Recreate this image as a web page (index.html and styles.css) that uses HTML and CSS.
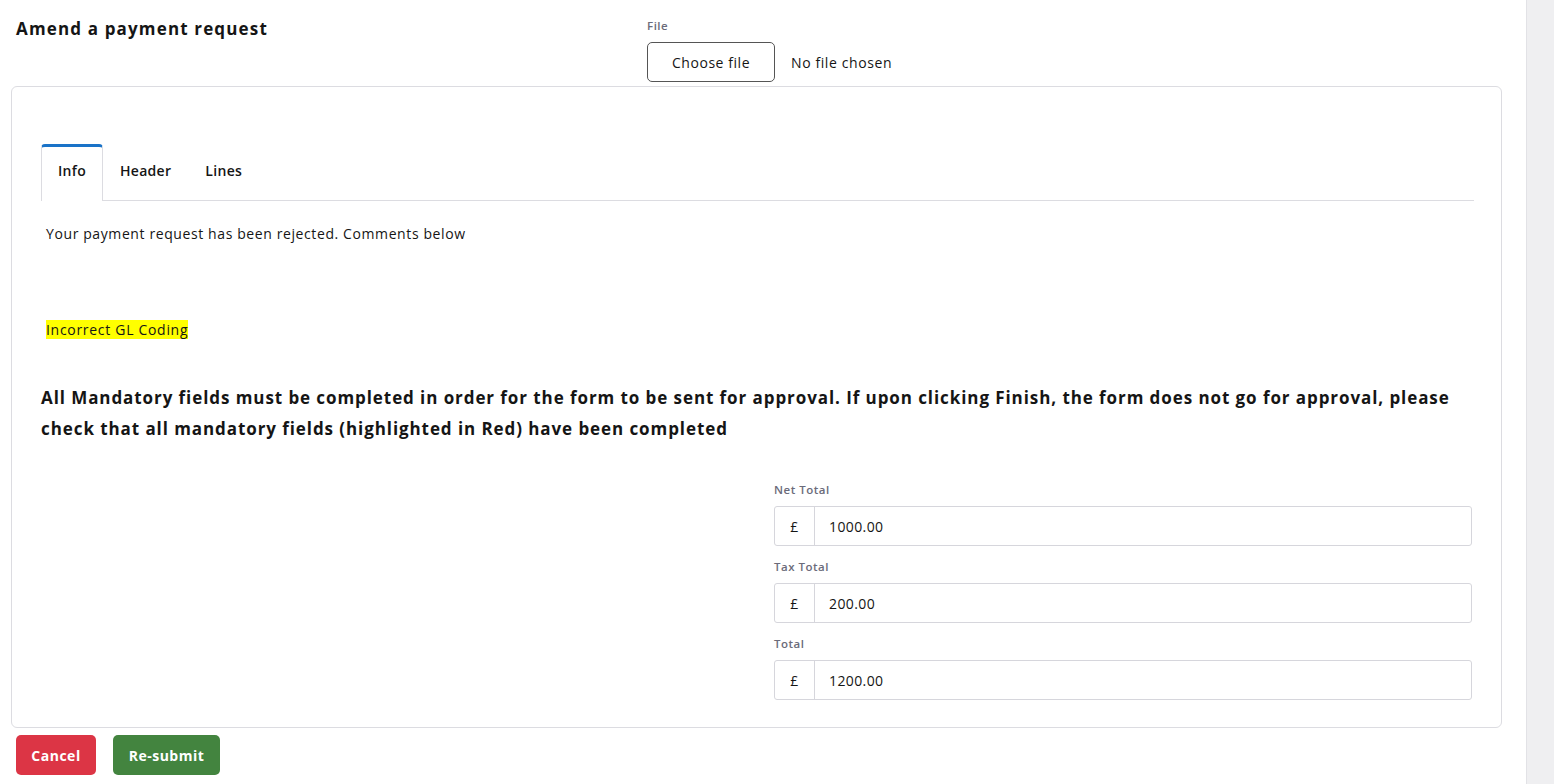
FILE: index.html
```html
<!DOCTYPE html>
<html lang="en">
<head>
<meta charset="utf-8">
<title>Amend a payment request</title>
<link rel="stylesheet" href="styles.css">
</head>
<body>
<div class="layout">
  <main class="main">
    <div class="top">
      <h1 class="title">Amend a payment request</h1>
      <div class="file-field">
        <div class="small-label">File</div>
        <div class="file-row">
          <button class="file-btn" type="button">Choose file</button>
          <span class="file-status">No file chosen</span>
        </div>
      </div>
    </div>
    <section class="card">
      <nav class="tabs">
        <span class="tab active">Info</span>
        <span class="tab">Header</span>
        <span class="tab">Lines</span>
      </nav>
      <div class="info">
        <p class="msg">Your payment request has been rejected. Comments below</p>
        <p class="comment"><mark class="hl">Incorrect GL Coding</mark></p>
      </div>
      <p class="notice">All Mandatory fields must be completed in order for the form to be sent for approval. If upon clicking Finish, the form does not go for approval, please check that all mandatory fields (highlighted in Red) have been completed</p>
      <div class="grid">
        <div></div>
        <div class="totals">
          <div class="field">
            <div class="small-label">Net Total</div>
            <div class="input-group"><span class="addon">£</span><span class="value">1000.00</span></div>
          </div>
          <div class="field">
            <div class="small-label">Tax Total</div>
            <div class="input-group"><span class="addon">£</span><span class="value">200.00</span></div>
          </div>
          <div class="field">
            <div class="small-label">Total</div>
            <div class="input-group"><span class="addon">£</span><span class="value">1200.00</span></div>
          </div>
        </div>
      </div>
    </section>
    <div class="actions">
      <button class="btn btn-cancel" type="button">Cancel</button>
      <button class="btn btn-submit" type="button">Re-submit</button>
    </div>
  </main>
  <aside class="side"></aside>
</div>
</body>
</html>
```
FILE: styles.css
```css
* { box-sizing: border-box; }
html, body { margin: 0; padding: 0; }
body {
  font-family: "Open Sans", "DejaVu Sans", sans-serif;
  color: #151515;
  background: #fff;
  height: 784px;
  overflow: hidden;
  letter-spacing: 0.6px;
}
.layout {
  display: flex;
  height: 784px;
}
.main {
  flex: 1;
  padding: 0 24px 0 11px;
}
.side {
  width: 28px;
  background: #efeff1;
  border-left: 1px solid #e2e2e6;
}
.top {
  display: flex;
  align-items: flex-start;
  height: 86px;
}
.title {
  margin: 18px 0 0 5px;
  font-size: 17px;
  font-weight: 700;
  line-height: 22px;
  width: 631px;
  letter-spacing: 1.15px;
}
.file-field {
  padding-top: 18px;
}
.small-label {
  font-size: 11.5px;
  font-weight: 600;
  color: #6b6b7a;
  line-height: 15px;
  letter-spacing: 0.5px;
}
.file-row {
  display: flex;
  align-items: center;
  margin-top: 9px;
}
.file-btn {
  width: 128px;
  height: 40px;
  border: 1px solid #555;
  border-radius: 5px;
  background: #fff;
  font: inherit;
  font-size: 14px;
  color: #151515;
  padding: 0;
  letter-spacing: 0.55px;
}
.file-status {
  margin-left: 16px;
  font-size: 14px;
}
.card {
  border: 1px solid #dcdce1;
  border-radius: 6px;
  height: 642px;
  padding: 57px 27px 0 29px;
}
.tabs {
  display: flex;
  border-bottom: 1px solid #dcdce1;
  height: 57px;
}
.tab {
  padding: 3px 17px 0;
  font-size: 14px;
  font-weight: 600;
  line-height: 48px;
  letter-spacing: 0.3px;
}
.tab.active {
  border: 1px solid #dcdce1;
  border-bottom: none;
  border-top: 3px solid #1a73c8;
  border-radius: 4px 4px 0 0;
  padding: 0 16px;
  background: #fff;
  margin-bottom: -1px;
  height: 57px;
}
.info {
  padding: 0 5px;
}
.msg {
  margin: 23px 0 0;
  font-size: 14px;
  line-height: 19px;
}
.comment {
  margin: 77px 0 0;
  font-size: 14px;
  line-height: 19px;
}
.hl {
  background: #ffff00;
  color: #151515;
  letter-spacing: 0.7px;
}
.notice {
  margin: 43px 0 0;
  font-size: 17px;
  font-weight: 700;
  line-height: 31px;
  letter-spacing: 0.92px;
}
.grid {
  display: grid;
  grid-template-columns: 1fr 698px;
  margin-top: 38px;
  padding-right: 2px;
}
.totals {
  display: flex;
  flex-direction: column;
  gap: 13px;
}
.field .small-label {
  margin-bottom: 9px;
}
.input-group {
  display: flex;
  height: 40px;
  border: 1px solid #d6d6dc;
  border-radius: 3px;
  font-size: 14px;
}
.addon {
  width: 40px;
  border-right: 1px solid #d6d6dc;
  display: flex;
  align-items: center;
  justify-content: center;
}
.value {
  display: flex;
  align-items: center;
  padding-left: 14px;
  letter-spacing: 0.4px;
}
.actions {
  display: flex;
  gap: 17px;
  margin: 7px 0 0 5px;
}
.btn {
  height: 40px;
  border: none;
  border-radius: 5px;
  color: #fff;
  font: inherit;
  font-size: 14px;
  font-weight: 700;
  padding: 0;
  letter-spacing: 0.5px;
}
.btn-cancel { background: #dc3545; width: 80px; }
.btn-submit { background: #43843f; width: 107px; }
```
